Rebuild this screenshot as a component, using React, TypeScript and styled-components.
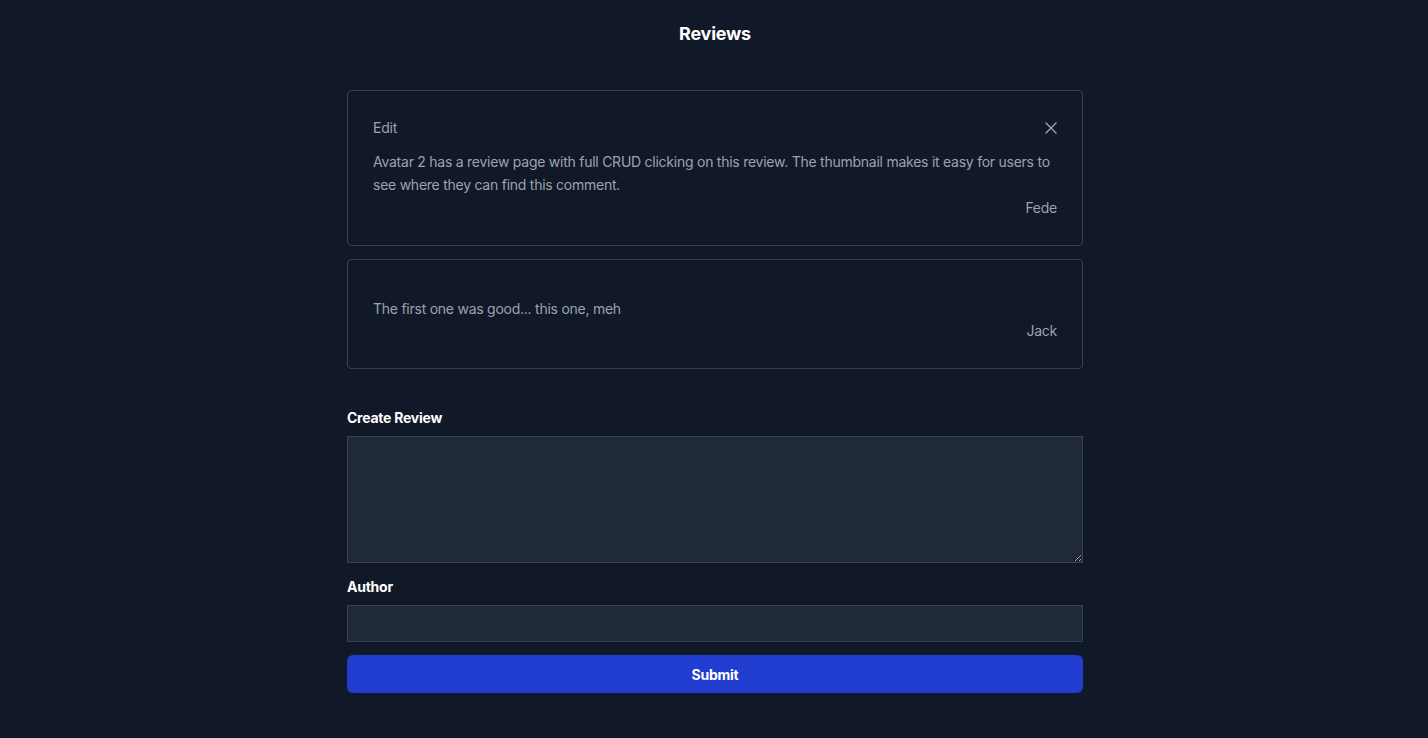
import React from "react";
import styled, { createGlobalStyle } from "styled-components";

const Global = createGlobalStyle`
  html, body { margin: 0; padding: 0; background: #111827; }
  body { font-family: Inter, "Noto Sans", "Liberation Sans", sans-serif; -webkit-font-smoothing: antialiased; letter-spacing: -0.25px; }
  * { box-sizing: border-box; }
`;

const Page = styled.div`
  min-height: 738px;
  background: #111827;
  padding: 22px 15px 40px 17px;
`;

const Title = styled.h1`
  margin: 0 0 44px;
  text-align: center;
  color: #ffffff;
  font-size: 18px;
  line-height: 24px;
  font-weight: 700;
`;

const Container = styled.div`
  width: 736px;
  margin: 0 auto;
  display: flex;
  flex-direction: column;
`;

const List = styled.div`
  display: flex;
  flex-direction: column;
  gap: 13px;
`;

const Card = styled.div`
  border: 1px solid #374151;
  border-radius: 4px;
  padding: 26px 25px;
  color: #9ca3af;
  font-size: 14px;
`;

const CardHeader = styled.div<{ $visible: boolean }>`
  display: flex;
  align-items: center;
  justify-content: space-between;
  height: ${(p) => (p.$visible ? "22px" : "0")};
  margin-bottom: 12px;
  line-height: 22px;
`;

const CloseButton = styled.button`
  background: none;
  border: none;
  padding: 0;
  color: #9ca3af;
  display: flex;
  align-items: center;
  cursor: pointer;
`;

const Body = styled.p`
  margin: 0;
  line-height: 22.75px;
`;

const Author = styled.div`
  text-align: right;
  line-height: 22px;
`;

const Form = styled.form`
  margin-top: 39px;
  display: flex;
  flex-direction: column;
`;

const Label = styled.label`
  color: #ffffff;
  font-size: 14px;
  font-weight: 700;
  line-height: 20px;
  margin-bottom: 8px;
`;

const TextArea = styled.textarea`
  height: 127px;
  background: #1f2937;
  border: 1px solid #374151;
  color: #e5e7eb;
  font: inherit;
  font-size: 14px;
  padding: 8px;
  margin-bottom: 14px;
  outline: none;
`;

const Input = styled.input`
  height: 37px;
  background: #1f2937;
  border: 1px solid #374151;
  color: #e5e7eb;
  font: inherit;
  font-size: 14px;
  padding: 0 8px;
  margin-bottom: 13px;
  outline: none;
`;

const Submit = styled.button`
  height: 38px;
  border: none;
  border-radius: 6px;
  background: #213dcf;
  color: #ffffff;
  font: inherit;
  font-size: 14px;
  font-weight: 700;
  letter-spacing: -0.25px;
  cursor: pointer;
`;

const reviews = [
  {
    id: 1,
    editable: true,
    text: "Avatar 2 has a review page with full CRUD clicking on this review. The thumbnail makes it easy for users to see where they can find this comment.",
    author: "Fede",
  },
  { id: 2, editable: false, text: "The first one was good... this one, meh", author: "Jack" },
];

export default function App() {
  return (
    <Page>
      <Global />
      <Title>Reviews</Title>
      <Container>
        <List>
          {reviews.map((r) => (
            <Card key={r.id}>
              <CardHeader $visible={r.editable}>
                {r.editable && (
                  <>
                    <span>Edit</span>
                    <CloseButton type="button" aria-label="close">
                      <svg width="12" height="12" viewBox="0 0 12 12" fill="none" stroke="currentColor" strokeWidth="1.4" strokeLinecap="round">
                        <path d="M1 1L11 11M11 1L1 11" />
                      </svg>
                    </CloseButton>
                  </>
                )}
              </CardHeader>
              <Body>{r.text}</Body>
              <Author>{r.author}</Author>
            </Card>
          ))}
        </List>
        <Form onSubmit={(e) => e.preventDefault()}>
          <Label htmlFor="review">Create Review</Label>
          <TextArea id="review" />
          <Label htmlFor="author">Author</Label>
          <Input id="author" />
          <Submit type="submit">Submit</Submit>
        </Form>
      </Container>
    </Page>
  );
}
